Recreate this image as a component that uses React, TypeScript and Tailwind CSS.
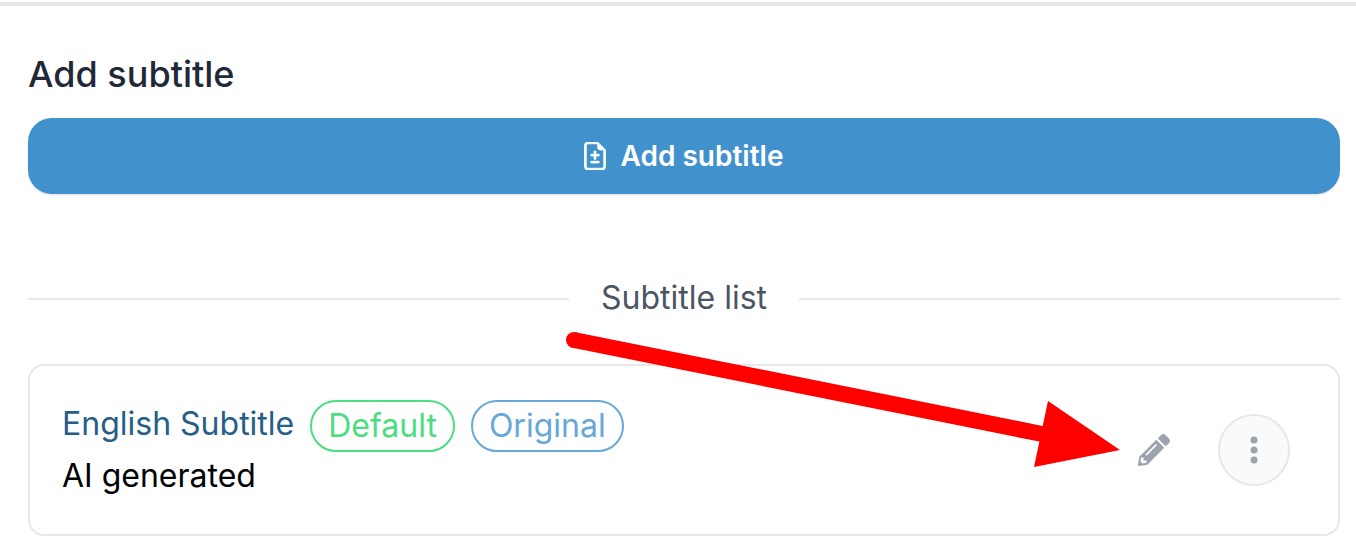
import { BsFileEarmarkDiff } from "react-icons/bs";
import { FaPencilAlt } from "react-icons/fa";

interface Badge {
  label: string;
  className: string;
}

interface Subtitle {
  id: number;
  name: string;
  note: string;
  badges: Badge[];
}

const subtitles: Subtitle[] = [
  {
    id: 1,
    name: "English Subtitle",
    note: "AI generated",
    badges: [
      { label: "Default", className: "border-[#4ade80] text-[#4ade80]" },
      { label: "Original", className: "border-[#67a7d9] text-[#67a7d9]" },
    ],
  },
];

function Arrow() {
  return (
    <svg
      viewBox="0 0 556 138"
      className="absolute -top-9 right-[217px] w-[556px] h-[138px] pointer-events-none"
      aria-hidden="true"
    >
      <path d="M9 10 477 104" stroke="#ff0000" strokeWidth="16" />
      <circle cx="9" cy="10" r="8" fill="#ff0000" />
      <path d="M483 71 469 137 555 120Z" fill="#ff0000" />
    </svg>
  );
}

function SubtitleRow({ subtitle }: { subtitle: Subtitle }) {
  return (
    <li className="relative flex items-center justify-between rounded-2xl border-2 border-[#e5e7eb] py-8 pl-8 pr-12">
      <div className="py-0.5 text-[32px] leading-[48px]">
        <div className="flex items-start gap-4">
          <a href="#" className="text-[#255e87]">
            {subtitle.name}
          </a>
          {subtitle.badges.map((badge) => (
            <span
              key={badge.label}
              className={`rounded-full border-2 px-4 ${badge.className}`}
            >
              {badge.label}
            </span>
          ))}
        </div>
        <p className="text-black">{subtitle.note}</p>
      </div>
      <div className="flex items-center gap-12 text-[#9ca3af]">
        <button type="button" aria-label="Edit subtitle">
          <FaPencilAlt className="size-8" />
        </button>
        <button
          type="button"
          aria-label="More options"
          className="flex size-[72px] items-center justify-center rounded-full border-2 border-[#e5e7eb] bg-gray-50"
        >
          <svg viewBox="0 0 32 32" fill="currentColor" className="size-8">
            <circle cx="16" cy="6" r="3.5" />
            <circle cx="16" cy="16" r="3.5" />
            <circle cx="16" cy="26" r="3.5" />
          </svg>
        </button>
      </div>
      <Arrow />
    </li>
  );
}

export default function App() {
  return (
    <div className="bg-white pt-0.5 font-['Inter',sans-serif]">
      <div className="h-1 bg-[#e5e7eb]" />
      <main className="pt-11 pb-5 pl-7 pr-4">
        <h1 className="text-[36px] leading-[48px] font-medium text-[#1f2937]">
          Add subtitle
        </h1>
        <button
          type="button"
          className="mt-5 flex h-[76px] w-full items-center justify-center gap-3 rounded-3xl bg-[#4191cd] pr-1 text-[28px] font-semibold text-white shadow-sm"
        >
          <BsFileEarmarkDiff className="size-7" strokeWidth="0.5" />
          Add subtitle
        </button>

        <div className="mt-20 flex items-center gap-8">
          <div className="mt-0.5 h-0.5 flex-1 bg-[#e5e7eb]" />
          <h2 className="text-[32px] leading-[48px] text-[#4b5563]">
            Subtitle list
          </h2>
          <div className="mt-0.5 h-0.5 flex-1 bg-[#e5e7eb]" />
        </div>

        <ul className="mt-[42px]">
          {subtitles.map((subtitle) => (
            <SubtitleRow key={subtitle.id} subtitle={subtitle} />
          ))}
        </ul>
      </main>
    </div>
  );
}
